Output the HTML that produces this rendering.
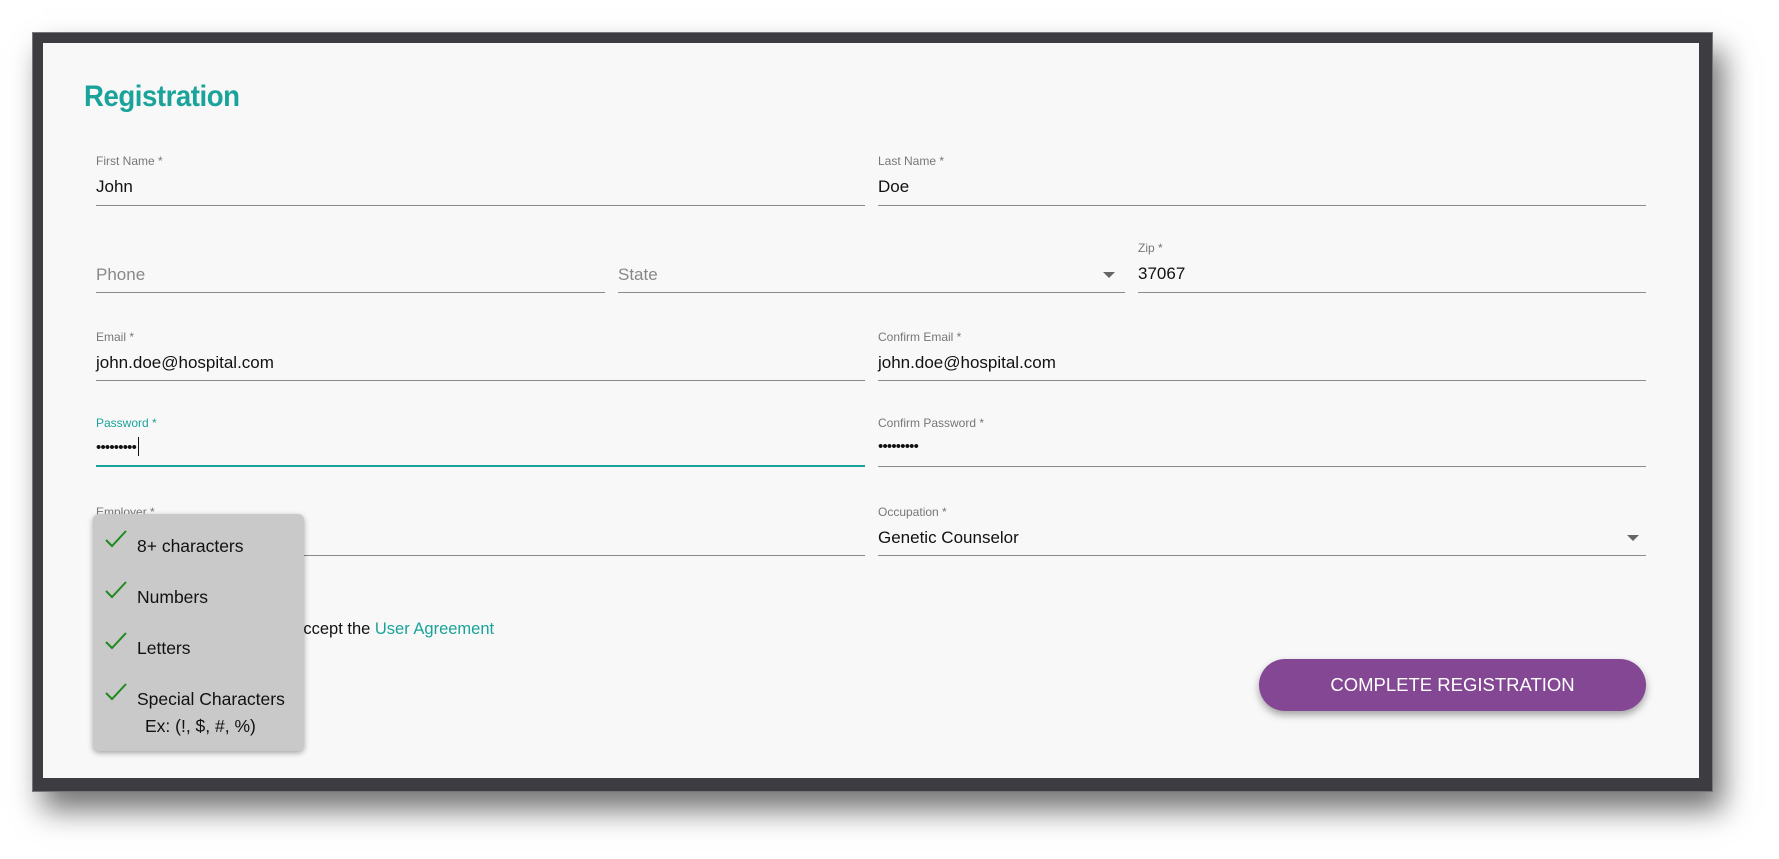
<!DOCTYPE html>
<html><head><meta charset="utf-8"><style>
*{margin:0;padding:0;box-sizing:border-box}
body{width:1779px;height:859px;background:#fff;position:relative;overflow:hidden;font-family:"Liberation Sans",sans-serif}
.frame{position:absolute;left:32px;top:32px;width:1681px;height:760px;background:#3d3c41;box-shadow:10px 18px 28px rgba(0,0,0,.55);border:1px solid #777}
.panel{position:absolute;left:43px;top:43px;width:1656px;height:735px;background:#f8f8f8}
h1{position:absolute;left:84px;top:80px;font-size:30px;font-weight:bold;color:#1aa39a;letter-spacing:-0.5px;transform:scaleX(.92);transform-origin:left}
.lbl{position:absolute;font-size:12px;color:#777}
.val{position:absolute;font-size:17px;color:#111}
.ph{position:absolute;font-size:17px;color:#888}
.ul{position:absolute;height:1px;background:#8a8a8a}
.arrow{position:absolute;width:0;height:0;border-left:6px solid transparent;border-right:6px solid transparent;border-top:6px solid #666}
.pop{position:absolute;left:93px;top:514px;width:211px;height:237px;background:#c9c9c9;border-radius:6px;box-shadow:0 2px 6px rgba(0,0,0,.35)}
.it{position:absolute;left:44px;font-size:17.5px;color:#111}
.ck{position:absolute;left:12px}
.btn{position:absolute;left:1259px;top:659px;width:387px;height:52px;border-radius:26px;background:#834793;color:#fff;font-size:18.5px;text-align:center;line-height:52px;box-shadow:0 4px 8px rgba(0,0,0,.35)}
</style></head><body>
<div class="frame"></div>
<div class="panel"></div>
<h1>Registration</h1>

<div class="lbl" style="left:96px;top:154px">First Name *</div>
<div class="val" style="left:96px;top:177px">John</div>
<div class="ul" style="left:96px;top:205px;width:769px"></div>
<div class="lbl" style="left:878px;top:154px">Last Name *</div>
<div class="val" style="left:878px;top:177px">Doe</div>
<div class="ul" style="left:878px;top:205px;width:768px"></div>

<div class="ph" style="left:96px;top:265px">Phone</div>
<div class="ul" style="left:96px;top:292px;width:509px"></div>
<div class="ph" style="left:618px;top:265px">State</div>
<div class="arrow" style="left:1103px;top:272px"></div>
<div class="ul" style="left:618px;top:292px;width:507px"></div>
<div class="lbl" style="left:1138px;top:241px">Zip *</div>
<div class="val" style="left:1138px;top:264px">37067</div>
<div class="ul" style="left:1138px;top:292px;width:508px"></div>

<div class="lbl" style="left:96px;top:330px">Email *</div>
<div class="val" style="left:96px;top:353px">john.doe@hospital.com</div>
<div class="ul" style="left:96px;top:380px;width:769px"></div>
<div class="lbl" style="left:878px;top:330px">Confirm Email *</div>
<div class="val" style="left:878px;top:353px">john.doe@hospital.com</div>
<div class="ul" style="left:878px;top:380px;width:768px"></div>

<div class="lbl" style="left:96px;top:416px;color:#1aa39a">Password *</div>
<div class="val" style="left:96px;top:437px;font-size:15px;letter-spacing:-0.8px">•••••••••<span style="display:inline-block;width:1px;height:19px;background:#111;vertical-align:-4px;margin-left:2px"></span></div>
<div class="ul" style="left:96px;top:465px;width:769px;height:2px;background:#1aa39a"></div>
<div class="lbl" style="left:878px;top:416px">Confirm Password *</div>
<div class="val" style="left:878px;top:438px;font-size:15px;letter-spacing:-0.8px">•••••••••</div>
<div class="ul" style="left:878px;top:466px;width:768px"></div>

<div class="lbl" style="left:96px;top:505px">Employer *</div>
<div class="ul" style="left:96px;top:555px;width:769px"></div>
<div class="lbl" style="left:878px;top:505px">Occupation *</div>
<div class="val" style="left:878px;top:528px">Genetic Counselor</div>
<div class="arrow" style="left:1627px;top:535px"></div>
<div class="ul" style="left:878px;top:555px;width:768px"></div>

<div class="val" style="left:285px;top:620px;font-size:16.5px">I accept the <span style="color:#1aa39a">User Agreement</span></div>

<div class="pop">
<svg class="ck" style="top:16px" width="22" height="18" viewBox="0 0 22 18"><path d="M1 10 L7 16 L21 1" fill="none" stroke="#1f8a1f" stroke-width="2"/></svg>
<div class="it" style="top:22px">8+ characters</div>
<svg class="ck" style="top:67px" width="22" height="18" viewBox="0 0 22 18"><path d="M1 10 L7 16 L21 1" fill="none" stroke="#1f8a1f" stroke-width="2"/></svg>
<div class="it" style="top:73px">Numbers</div>
<svg class="ck" style="top:118px" width="22" height="18" viewBox="0 0 22 18"><path d="M1 10 L7 16 L21 1" fill="none" stroke="#1f8a1f" stroke-width="2"/></svg>
<div class="it" style="top:124px">Letters</div>
<svg class="ck" style="top:169px" width="22" height="18" viewBox="0 0 22 18"><path d="M1 10 L7 16 L21 1" fill="none" stroke="#1f8a1f" stroke-width="2"/></svg>
<div class="it" style="top:175px">Special Characters</div>
<div class="it" style="top:202px;left:52px">Ex: (!, $, #, %)</div>
</div>

<div class="btn">COMPLETE REGISTRATION</div>
</body></html>
